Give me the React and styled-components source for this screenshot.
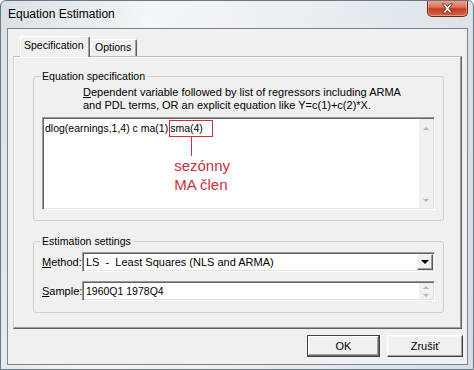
import React from 'react';
import styled, { createGlobalStyle } from 'styled-components';

const Global = createGlobalStyle`
  html, body { margin: 0; padding: 0; background: #ffffff; }
  body { font-family: "Liberation Sans", Arial, sans-serif; }
`;

const Window = styled.div`
  width: 474px;
  height: 370px;
  box-sizing: border-box;
  border: 1px solid #6b7783;
  border-radius: 6px 6px 0 0;
  background: linear-gradient(100deg, #d9e0e5 0%, #f3f5f7 28%, #eceff2 55%, #d4dee6 100%);
  display: flex;
  flex-direction: column;
  overflow: hidden;
`;

const TitleBar = styled.div`
  height: 27px;
  flex: none;
  display: flex;
  justify-content: space-between;
  align-items: flex-start;
  padding-left: 7px;
`;

const Title = styled.div`
  font: 12px/27px "Liberation Sans", Arial, sans-serif;
  color: #000;
`;

const CloseButton = styled.div`
  width: 41px;
  height: 17px;
  margin-top: -1px;
  margin-right: 5px;
  box-sizing: border-box;
  border: 1px solid #6e2418;
  border-top: none;
  border-radius: 0 0 5px 5px;
  background: linear-gradient(#eaa996 0%, #d9735a 45%, #c33a21 55%, #d8674b 100%);
  box-shadow: inset 0 0 0 1px rgba(255, 255, 255, 0.35);
  display: flex;
  align-items: center;
  justify-content: center;
`;

const Client = styled.div`
  margin: 0 5px 0 6px;
  height: 337px;
  box-sizing: border-box;
  border: 1px solid #7b858e;
  background: #f0f0f0;
  display: flex;
  flex-direction: column;
`;

const TabStrip = styled.div`
  display: flex;
  align-items: flex-end;
  height: 20px;
  margin-top: 7px;
  padding-left: 12px;
  position: relative;
  z-index: 1;
`;

const Tab = styled.div`
  box-sizing: border-box;
  width: ${p => p.$w}px;
  height: ${p => (p.$active ? 21 : 17)}px;
  margin-bottom: ${p => (p.$active ? -1 : 0)}px;
  padding: ${p => (p.$active ? '1px 0 0 3px' : '0 0 0 4px')};
  border: 1px solid;
  border-bottom: none;
  border-color: #ffffff #5f5f5f transparent #ffffff;
  border-radius: 2px 2px 0 0;
  box-shadow: inset -1px 0 #a0a0a0;
  background: #f0f0f0;
  font: 10.5px/14px "Liberation Sans", Arial, sans-serif;
  color: #000;
`;

const Panel = styled.div`
  margin: 0 5px 0 5px;
  height: 273px;
  box-sizing: border-box;
  border: 1px solid;
  border-color: #bdbdbd #5f5f5f #5f5f5f #d0d0d0;
  box-shadow: inset -1px -1px #a0a0a0, inset 1px 1px #ffffff;
  display: flex;
  flex-direction: column;
`;

const Group = styled.fieldset`
  margin: ${p => p.$top}px 17px 0 19px;
  padding: 0 8px ${p => p.$bottom}px 8px;
  border: 1px solid #cfcfcf;
  border-radius: 3px;
  min-width: 0;
`;

const Legend = styled.legend`
  padding: 0 2px;
  margin-left: -2px;
  font: 10.6px/13px "Liberation Sans", Arial, sans-serif;
  color: #000;
`;

const Description = styled.div`
  margin-top: 3px;
  padding-left: 41px;
  font: 11px/13px "Liberation Sans", Arial, sans-serif;
  color: #000;
`;

const Field = styled.div`
  box-sizing: border-box;
  height: ${p => p.$h}px;
  margin-top: ${p => p.$mt || 0}px;
  display: flex;
  background: #ffffff;
  border: 1px solid;
  border-color: #9a9a9a #ffffff #ffffff #9a9a9a;
  box-shadow: inset 1px 1px #646464, inset -1px -1px #e3e3e3;
`;

const FieldText = styled.div`
  flex: 1;
  position: relative;
  padding: ${p => p.$pad};
  font: ${p => p.$size || 11}px/14px "Liberation Sans", Arial, sans-serif;
  color: #000;
  white-space: pre;
`;

const Marked = styled.span`
  position: relative;
  display: inline-block;
  height: 15px;
  line-height: 15px;
  margin-left: 1px;
  padding-right: 9px;
  border: 1px solid #c8303d;
`;

const Pointer = styled.span`
  position: absolute;
  left: 21px;
  top: 16px;
  width: 1px;
  height: 19px;
  background: #c8303d;
`;

const Note = styled.span`
  position: absolute;
  left: 4px;
  top: 35px;
  font: 15px/19px "Liberation Sans", Arial, sans-serif;
  color: #cc2f3d;
  white-space: pre;
`;

const ScrollBar = styled.div`
  width: 14px;
  margin: 1px 1px 1px 0;
  background: #f0f0f0;
  display: flex;
  flex-direction: column;
  justify-content: space-between;
  align-items: center;
  padding: ${p => p.$pad};
`;

const Arrow = styled.span`
  width: 0;
  height: 0;
  border-left: ${p => p.$size || 3}px solid transparent;
  border-right: ${p => p.$size || 3}px solid transparent;
  ${p => (p.$up ? 'border-bottom' : 'border-top')}: ${p => p.$size || 3}px solid ${p => p.$color || '#b4b4b4'};
`;

const DropButton = styled.div`
  width: 16px;
  box-sizing: border-box;
  margin: 1px 1px 1px 0;
  background: #f0f0f0;
  border: 1px solid;
  border-color: #f6f6f6 #5f5f5f #5f5f5f #f6f6f6;
  box-shadow: inset -1px -1px #a0a0a0;
  display: flex;
  align-items: center;
  justify-content: center;
`;

const SettingsGrid = styled.div`
  display: grid;
  grid-template-columns: 40px 1fr;
  row-gap: 9px;
  align-items: center;
  margin-top: 4px;
`;

const Label = styled.label`
  font: 11px/14px "Liberation Sans", Arial, sans-serif;
  color: #000;
  white-space: nowrap;
`;

const ButtonRow = styled.div`
  display: flex;
  justify-content: flex-end;
  gap: 7px;
  margin-top: 6px;
  padding-right: 4px;
`;

const Button = styled.button`
  width: ${p => p.$w}px;
  height: 22px;
  box-sizing: border-box;
  padding: 0;
  background: #f0f0f0;
  border: 1px solid;
  border-color: ${p => (p.$default ? '#404040' : '#ffffff #404040 #404040 #ffffff')};
  box-shadow: ${p =>
    p.$default
      ? 'inset -1px -1px #696969, inset 1px 1px #ffffff, inset -2px -2px #a0a0a0'
      : 'inset -1px -1px #a0a0a0, inset 1px 1px #f6f6f6'};
  font: 11px "Liberation Sans", Arial, sans-serif;
  color: #000;
`;

function CloseGlyph() {
  return (
    <svg width="13" height="11" viewBox="0 0 13 11">
      <path
        d="M1.5 1 L4.5 1 L6.5 3.5 L8.5 1 L11.5 1 L8 5.5 L11.5 10 L8.5 10 L6.5 7.5 L4.5 10 L1.5 10 L5 5.5 Z"
        fill="#ffffff"
        stroke="#5a1a10"
        strokeWidth="0.8"
        strokeLinejoin="round"
      />
    </svg>
  );
}

export default function App() {
  return (
    <>
      <Global />
      <Window>
        <TitleBar>
          <Title>Equation Estimation</Title>
          <CloseButton>
            <CloseGlyph />
          </CloseButton>
        </TitleBar>
        <Client>
          <TabStrip>
            <Tab $active $w={70}>Specification</Tab>
            <Tab $w={47}>Options</Tab>
          </TabStrip>
          <Panel>
            <Group $top={13} $bottom={10}>
              <Legend>Equation specification</Legend>
              <Description>
                <u>D</u>ependent variable followed by list of regressors including ARMA
                <br />
                and PDL terms, OR an explicit equation like Y=c(1)+c(2)*X.
              </Description>
              <Field $h={93} $mt={5}>
                <FieldText $pad="2px 0 0 2px" $size={10.5}>
                  dlog(earnings,1,4) c ma(1)
                  <Marked>
                    sma(4)
                    <Pointer />
                    <Note>{'sezónny\nMA člen'}</Note>
                  </Marked>
                </FieldText>
                <ScrollBar $pad="8px 0 6px">
                  <Arrow $up />
                  <Arrow />
                </ScrollBar>
              </Field>
            </Group>
            <Group $top={14} $bottom={11}>
              <Legend>Estimation settings</Legend>
              <SettingsGrid>
                <Label>
                  <u>M</u>ethod:
                </Label>
                <Field $h={20}>
                  <FieldText $pad="2px 0 0 3px">LS  -  Least Squares (NLS and ARMA)</FieldText>
                  <DropButton>
                    <Arrow $color="#000" $size={4} />
                  </DropButton>
                </Field>
                <Label>
                  <u>S</u>ample:
                </Label>
                <Field $h={20}>
                  <FieldText $pad="2px 0 0 3px" $size={10.5}>1960Q1 1978Q4</FieldText>
                  <ScrollBar $pad="3px 0 2px">
                    <Arrow $up />
                    <Arrow />
                  </ScrollBar>
                </Field>
              </SettingsGrid>
            </Group>
          </Panel>
          <ButtonRow>
            <Button $default $w={73}>OK</Button>
            <Button $w={76}>Zrušiť</Button>
          </ButtonRow>
        </Client>
      </Window>
    </>
  );
}
